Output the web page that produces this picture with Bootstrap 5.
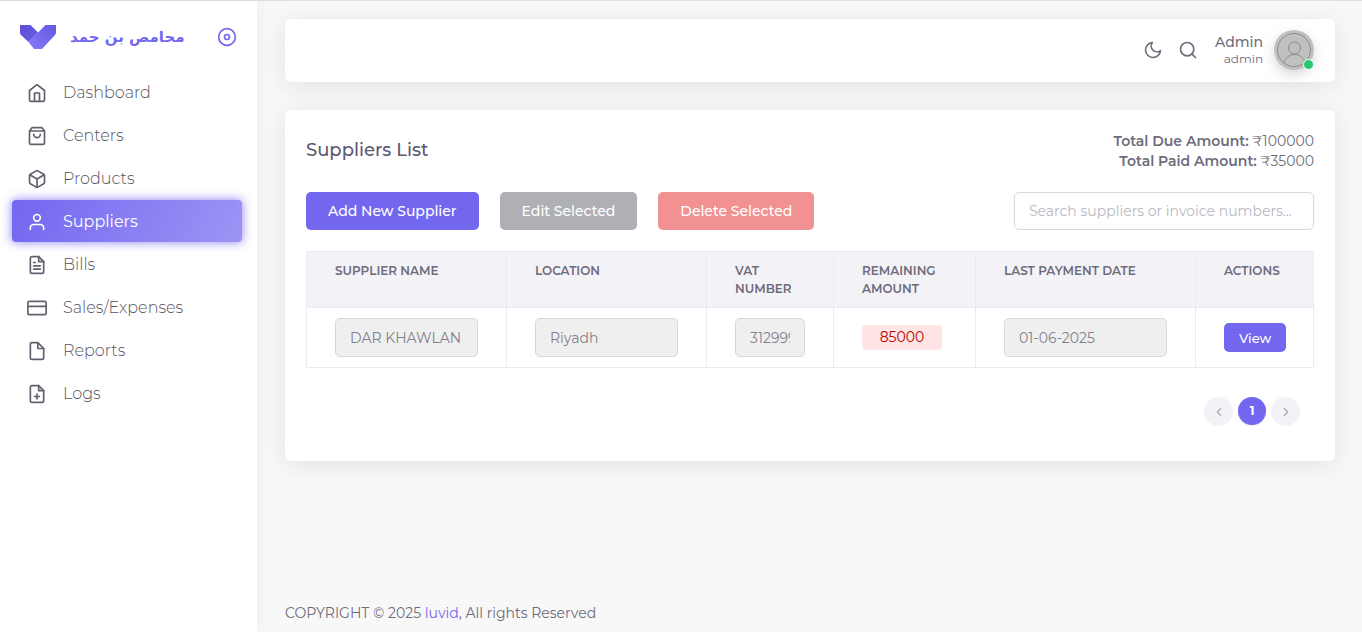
<!DOCTYPE html>
<html lang="en">
<head>
<meta charset="utf-8">
<meta name="viewport" content="width=device-width, initial-scale=1">
<title>Suppliers List</title>
<link href="https://cdn.jsdelivr.net/npm/bootstrap@5.3.0/dist/css/bootstrap.min.css" rel="stylesheet">
<style>
:root{--brand:#7367f0;--ink:#6e6b7b;--head:#5e5873;--line:#ebe9f1}
body{font-family:Montserrat,Inter,"Liberation Sans",sans-serif;font-size:14px;line-height:20px;color:var(--ink);background:#f8f8f8}
.shell{min-height:100vh;border-top:1px solid #dfdfdf}
.ico{width:20px;height:20px;fill:none;stroke:currentColor;stroke-width:2;stroke-linecap:round;stroke-linejoin:round;flex:none}
.side{width:257px;flex:none;background:#fff;box-shadow:0 0 15px rgba(34,41,47,.05)}
.brandbar{padding:24px 20px 0}
.brandbar a{gap:14px;font:bold 15px/24px "DejaVu Sans",sans-serif}
.brandbar a,.pin{color:var(--brand)}
.menu{margin:22px 15px 0 12px;gap:1px}
.menu .nav-link{display:flex;align-items:center;gap:16px;height:42px;padding:2px 15px 0;border-radius:4px;font-size:16px;font-weight:300;color:#565360}
.menu .ico{color:#625f6e}
.menu .active,.menu .active .ico{color:#fff}
.menu .active{font-weight:400;background:linear-gradient(118deg,#7367f0,rgba(115,103,240,.7));box-shadow:0 0 10px 1px rgba(115,103,240,.7)}
.content{min-width:0;padding:18px 27px 9px 28px}
.panel{background:#fff;border-radius:6px;box-shadow:0 4px 24px 0 rgba(34,41,47,.1)}
.topbar{padding:11px 21px 12px}
.topbar .tools{gap:15px;margin-right:17px}
.topbar .tool{color:var(--ink);line-height:0}
.topbar .who{gap:11px}
.user-name{font-size:14px;font-weight:500;line-height:18px}
.user-role{font-size:12px;line-height:16px}
.avatar-wrap{width:40px;height:40px;border-radius:50%;box-shadow:0 4px 8px rgba(34,41,47,.12),0 6px 20px rgba(34,41,47,.08)}
.dot{width:11px;height:11px;background:#28c76f;border:1px solid #fff;right:0;bottom:0}
.listing{margin-top:28px;padding:21px 21px 35px}
.listing h1{font-size:18px;line-height:22px;font-weight:500;color:var(--head)}
.toolbar{gap:21px;margin:21px 0}
.listing .btn{font-size:14px;font-weight:500;line-height:14px;height:38px;padding:0 21px;border-radius:5px;color:#fff}
.btn-brand{background:var(--brand)}
.btn-grey{background:#afb0b5}
.btn-rose{background:#f29192}
.listing .btn.btn-view{font-size:13px;height:29px;padding:0 14px}
.form-control{font-size:14px;line-height:20px;height:38px;padding:0 14px;border:1px solid #d8d6de;border-radius:5px;color:var(--ink)}
.form-control::placeholder{color:#b9b9c3}
.find{width:300px}
.grid{table-layout:fixed;margin:0;border-color:var(--line);color:var(--ink)}
.grid th{background:#f3f2f7;font-size:12px;line-height:18px;font-weight:600;padding:10px 28px 9px;vertical-align:top;text-transform:uppercase}
.grid td{padding:10px 28px;vertical-align:middle}
.grid .form-control{height:39px}
.grid .form-control:disabled{background:#efefef;color:#82808c;opacity:1}
.owed{width:80px;line-height:25px;border-radius:4px;background:#ffe5e5;color:#b80000;text-align:center}
.pages{margin:29px 14px 0;gap:5px}
.page-dot{width:29px;height:29px;border:0;border-radius:50%;background:#f3f2f7;color:#a9a7b2}
.page-dot .ico{width:14px;height:14px}
.page-dot.on{width:28px;height:28px;background:var(--brand);color:#fff;font-size:12px;font-weight:700;box-shadow:0 1px 2px rgba(34,41,47,.12)}
footer a{color:var(--brand)}
</style>
</head>
<body>
<div class="shell d-flex">
  <aside class="side">
    <div class="brandbar d-flex align-items-center justify-content-between">
      <a href="#" class="d-flex align-items-center text-decoration-none">
        <svg width="36" height="24" viewBox="0 0 36 24" aria-hidden="true">
          <defs>
            <linearGradient id="g1" x1="0" y1="0" x2="1" y2="1"><stop offset="0" stop-color="#5b50d6"/><stop offset="1" stop-color="#6a5fe2"/></linearGradient>
            <linearGradient id="g2" x1="1" y1="0" x2="0" y2="1"><stop offset="0" stop-color="#6357e0"/><stop offset="1" stop-color="#877cfb"/></linearGradient>
          </defs>
          <path d="M0 0h10.500L18 7.500 8.500 17 1.500 10.500C.4 9.500 0 8.500 0 7z" fill="url(#g1)"/>
          <path d="M25.500 0H36v7c0 1.500-.4 2.500-1.500 3.500L22 24h-8l-5.500-7L18 7.500z" fill="url(#g2)"/>
        </svg>
        <span lang="ar" dir="rtl">محامص بن حمد</span>
      </a>
      <button type="button" class="pin btn p-0 border-0 lh-1" aria-label="Pin menu"><svg class="ico d-block" viewBox="0 0 24 24"><circle cx="12" cy="12" r="10"/><circle cx="12" cy="12" r="3"/></svg></button>
    </div>
    <nav class="menu nav flex-column">
      <a class="nav-link" href="#"><svg class="ico" viewBox="0 0 24 24"><path d="M3 9l9-7 9 7v11a2 2 0 0 1-2 2H5a2 2 0 0 1-2-2z"/><path d="M9 22V12h6v10"/></svg>Dashboard</a>
      <a class="nav-link" href="#"><svg class="ico" viewBox="0 0 24 24"><path d="M6 2L3 6v14a2 2 0 0 0 2 2h14a2 2 0 0 0 2-2V6l-3-4zM3 6h18M16 10a4 4 0 0 1-8 0"/></svg>Centers</a>
      <a class="nav-link" href="#"><svg class="ico" viewBox="0 0 24 24"><path d="M21 16V8a2 2 0 0 0-1-1.730l-7-4a2 2 0 0 0-2 0l-7 4A2 2 0 0 0 3 8v8a2 2 0 0 0 1 1.730l7 4a2 2 0 0 0 2 0l7-4A2 2 0 0 0 21 16z"/><path d="M3.270 6.960L12 12.010l8.730-5.050M12 22.080V12"/></svg>Products</a>
      <a class="nav-link active" href="#" aria-current="page"><svg class="ico" viewBox="0 0 24 24"><path d="M20 21v-2a4 4 0 0 0-4-4H8a4 4 0 0 0-4 4v2"/><circle cx="12" cy="7" r="4"/></svg>Suppliers</a>
      <a class="nav-link" href="#"><svg class="ico" viewBox="0 0 24 24"><path d="M14 2H6a2 2 0 0 0-2 2v16a2 2 0 0 0 2 2h12a2 2 0 0 0 2-2V8z"/><path d="M14 2v6h6M16 13H8M16 17H8M10 9H8"/></svg>Bills</a>
      <a class="nav-link" href="#"><svg class="ico" viewBox="0 0 24 24"><rect x="1" y="4" width="22" height="16" rx="2"/><path d="M1 10h22"/></svg>Sales/Expenses</a>
      <a class="nav-link" href="#"><svg class="ico" viewBox="0 0 24 24"><path d="M13 2H6a2 2 0 0 0-2 2v16a2 2 0 0 0 2 2h12a2 2 0 0 0 2-2V9z"/><path d="M13 2v7h7"/></svg>Reports</a>
      <a class="nav-link" href="#"><svg class="ico" viewBox="0 0 24 24"><path d="M14 2H6a2 2 0 0 0-2 2v16a2 2 0 0 0 2 2h12a2 2 0 0 0 2-2V8z"/><path d="M14 2v6h6M12 18v-6M9 15h6"/></svg>Logs</a>
    </nav>
  </aside>

  <div class="content d-flex flex-column flex-grow-1">
    <header class="topbar panel d-flex align-items-center justify-content-end">
      <div class="tools d-flex">
        <button type="button" class="tool btn p-0 border-0" aria-label="Dark mode"><svg class="ico" viewBox="0 0 24 24"><path d="M21 12.790A9 9 0 1 1 11.210 3 7 7 0 0 0 21 12.790z"/></svg></button>
        <button type="button" class="tool btn p-0 border-0" aria-label="Search"><svg class="ico" viewBox="0 0 24 24"><circle cx="11" cy="11" r="8"/><path d="M21 21l-4.350-4.350"/></svg></button>
      </div>
      <a href="#" class="who d-flex align-items-center text-decoration-none text-reset">
        <div class="text-end">
          <div class="user-name">Admin</div>
          <div class="user-role">admin</div>
        </div>
        <div class="avatar-wrap position-relative">
          <svg class="d-block" width="40" height="40" viewBox="0 0 40 40" fill="none" stroke="#8b8b8b" aria-hidden="true"><circle cx="20" cy="20" r="20" fill="#c0c0c0" stroke="none"/><circle cx="20" cy="20" r="16.500"/><circle cx="20.500" cy="18" r="6"/><path d="M10 33c1-5 5-8.500 10.500-8.500S30 28 31 33"/></svg>
          <span class="dot position-absolute rounded-circle"></span>
        </div>
      </a>
    </header>

    <main class="listing panel">
      <div class="d-flex justify-content-between align-items-start">
        <h1 class="mb-0 mt-2">Suppliers List</h1>
        <div class="text-end"><strong class="fw-semibold">Total Due Amount:</strong> ₹100000<br><strong class="fw-semibold">Total Paid Amount:</strong> ₹35000</div>
      </div>
      <div class="toolbar d-flex align-items-center">
        <button type="button" class="btn btn-brand">Add New Supplier</button>
        <button type="button" class="btn btn-grey">Edit Selected</button>
        <button type="button" class="btn btn-rose">Delete Selected</button>
        <input type="text" class="form-control find ms-auto" placeholder="Search suppliers or invoice numbers..." aria-label="Search suppliers">
      </div>
      <table class="grid table table-bordered">
        <colgroup><col width="200"><col width="200"><col width="127"><col width="142"><col width="220"><col width="118"></colgroup>
        <thead><tr><th>Supplier Name</th><th>Location</th><th>VAT Number</th><th>Remaining Amount</th><th>Last Payment Date</th><th>Actions</th></tr></thead>
        <tbody><tr>
          <td><input type="text" class="form-control" value="DAR KHAWLAN" aria-label="Supplier name" disabled></td>
          <td><input type="text" class="form-control" value="Riyadh" aria-label="Location" disabled></td>
          <td><input type="text" class="form-control" value="312999" aria-label="VAT number" disabled></td>
          <td><div class="owed">85000</div></td>
          <td><input type="text" class="form-control" value="01-06-2025" aria-label="Last payment date" disabled></td>
          <td><button type="button" class="btn btn-brand btn-view">View</button></td>
        </tr></tbody>
      </table>
      <nav class="pages d-flex justify-content-end" aria-label="Pages">
        <button type="button" class="page-dot d-flex align-items-center justify-content-center p-0" aria-label="Previous"><svg class="ico" viewBox="0 0 24 24"><path d="M15 18l-6-6 6-6"/></svg></button>
        <button type="button" class="page-dot on p-0">1</button>
        <button type="button" class="page-dot d-flex align-items-center justify-content-center p-0" aria-label="Next"><svg class="ico" viewBox="0 0 24 24"><path d="M9 18l6-6-6-6"/></svg></button>
      </nav>
    </main>

    <footer class="mt-auto">COPYRIGHT © 2025 <a href="#" class="text-decoration-none">luvid</a>, All rights Reserved</footer>
  </div>
</div>
<script src="https://cdn.jsdelivr.net/npm/bootstrap@5.3.0/dist/js/bootstrap.bundle.min.js"></script>
</body>
</html>
